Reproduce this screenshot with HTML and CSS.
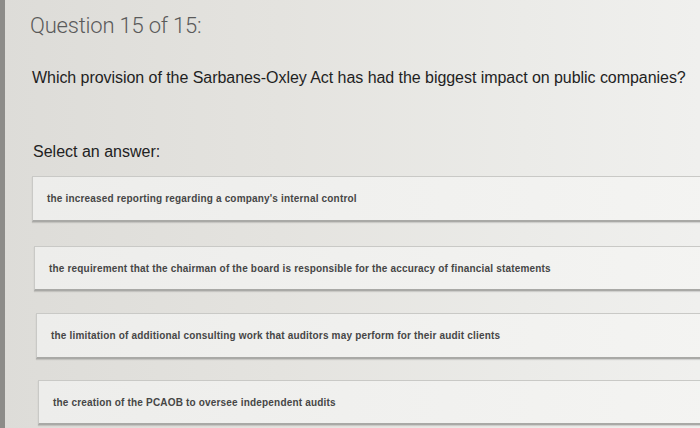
FILE: index.html
```html
<!DOCTYPE html>
<html>
<head>
<meta charset="utf-8">
<link rel="stylesheet" href="styles.css">
</head>
<body>
<div class="page">
  <h1 class="title">Question 15 of 15:</h1>
  <p class="question">Which provision of the Sarbanes-Oxley Act has had the biggest impact on public companies?</p>
  <p class="prompt">Select an answer:</p>
  <div class="options">
    <div class="option opt1">the increased reporting regarding a company's internal control</div>
    <div class="option opt2">the requirement that the chairman of the board is responsible for the accuracy of financial statements</div>
    <div class="option opt3">the limitation of additional consulting work that auditors may perform for their audit clients</div>
    <div class="option opt4">the creation of the PCAOB to oversee independent audits</div>
  </div>
</div>
</body>
</html>
```
FILE: styles.css
```css
html, body {
  margin: 0;
  padding: 0;
  width: 700px;
  height: 428px;
  overflow: hidden;
}
body {
  background: linear-gradient(90deg, #dddcd8 0%, #e4e3df 40%, #ebebe8 75%, #f0f0ee 100%);
  border-left: 5px solid #8d8c89;
  box-sizing: border-box;
  font-family: "Liberation Sans", Arial, sans-serif;
}
.page {
  padding: 12px 0 0 25px;
}
.title {
  margin: 0;
  font-family: Roboto, "Liberation Sans", sans-serif;
  font-weight: 300;
  font-size: 22px;
  line-height: 27px;
  color: #5a5a5a;
  letter-spacing: -0.2px;
}
.question {
  margin: 29px 0 0 2px;
  font-size: 16px;
  line-height: 20px;
  color: #1f1f1f;
  letter-spacing: -0.05px;
}
.prompt {
  margin: 54px 0 0 3px;
  font-size: 16px;
  line-height: 20px;
  color: #222;
}
.options {
  display: flex;
  flex-direction: column;
  margin-right: -20px;
}
.option {
  box-sizing: border-box;
  background: linear-gradient(90deg, #ededeb 0%, #f1f1ef 60%, #f4f4f2 100%);
  border: 1px solid #c9c9c6;
  border-bottom: 2px solid #a9a9a6;
  box-shadow: 0 1px 1px rgba(0,0,0,0.12);
  display: flex;
  align-items: center;
  padding-left: 14px;
  font-size: 10px;
  font-weight: bold;
  color: #464646;
  letter-spacing: 0.18px;
}
.opt1 { margin: 14px 0 0 2px; height: 46px; }
.opt2 { margin: 24px 0 0 4px; height: 45px; }
.opt3 { margin: 22px 0 0 6px; height: 46px; }
.opt4 { margin: 21px 0 0 8px; height: 45px; }
```
